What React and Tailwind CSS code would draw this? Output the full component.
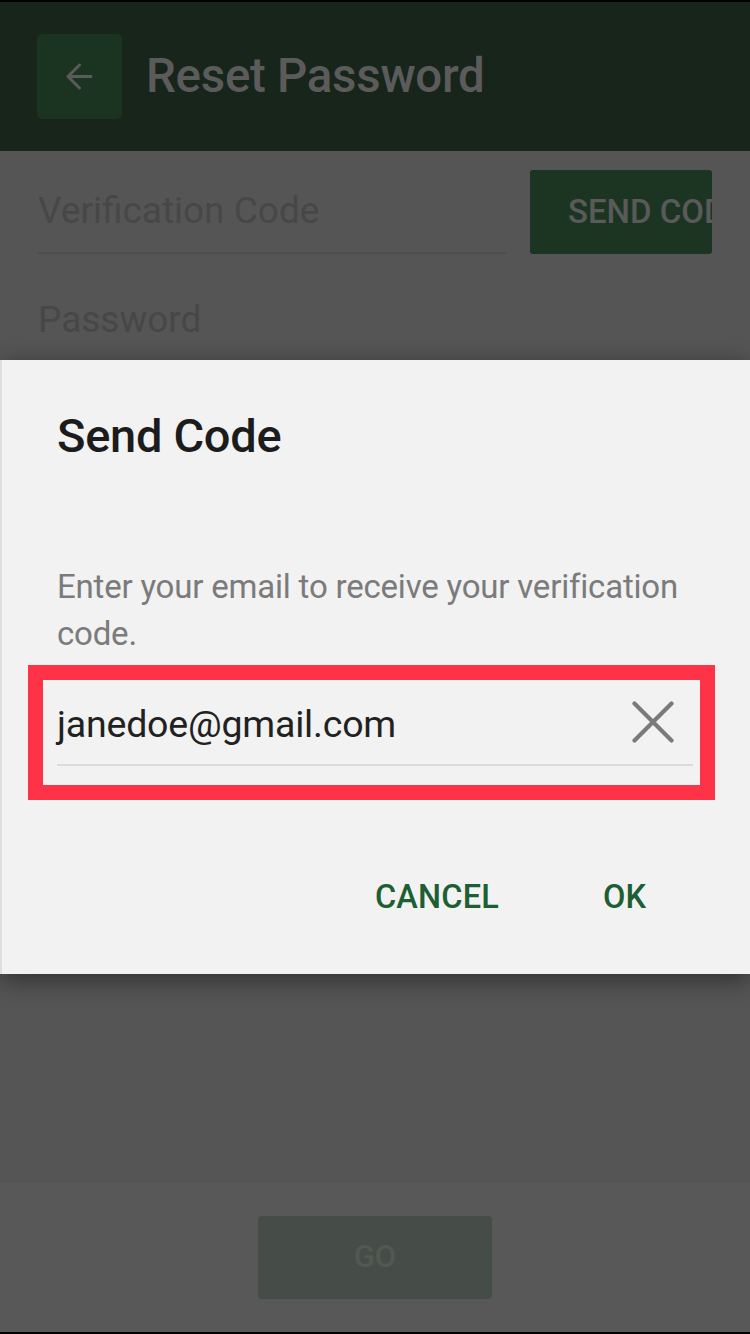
/*
 * Reset Password screen with the "Send Code" dialog open.
 */

function FlechaAtras() {
  return (
    <svg width="27" height="27" viewBox="0 0 27 27" fill="none" stroke="#5b5b5b" strokeWidth="3" strokeLinecap="round" strokeLinejoin="round">
      <path d="M25 13.5H2.5M13.5 2L2 13.5L13.5 25" />
    </svg>
  )
}

function IconoCerrar() {
  return (
    <svg width="42" height="42" viewBox="0 0 42 42" fill="none" stroke="#7a7a7a" strokeWidth="4.2" strokeLinecap="round">
      <path d="M2.5 2.5L39.5 39.5M39.5 2.5L2.5 39.5" />
    </svg>
  )
}

function DialogoEnviarCodigo() {
  return (
    <div className="absolute inset-0 flex items-center">
      <div className="w-full h-[614px] bg-[#f2f2f2] border-l-2 border-[#dedede] shadow-[0_6px_24px_rgba(0,0,0,0.45)] flex flex-col">
        <h2 className="pl-[55px] pt-[49px] text-[47px] leading-[54px] font-medium text-[#1c1c1c] tracking-[-0.3px]">
          Send Code
        </h2>
        <p className="pl-[55px] pr-[30px] mt-[100px] text-[33px] leading-[47px] text-[#7b7b7b] tracking-[-0.2px]">
          Enter your email to receive your verification code.
        </p>

        {/* Campo de correo resaltado */}
        <div className="ml-[26px] mr-[35px] mt-[8px] h-[135px] border-[15px] border-[#ff3347] flex flex-col">
          <div className="ml-[14px] mr-[7px] flex-1 flex flex-col">
            <div className="flex items-center justify-between h-[84px] pr-[19px]">
              <span className="text-[37.5px] text-[#212121] tracking-[-0.2px] pt-[4px]">janedoe@gmail.com</span>
              <IconoCerrar />
            </div>
            <div className="h-[2px] bg-[#dcdcdc]" />
          </div>
        </div>

        <div className="flex justify-end items-center gap-[104px] pr-[104px] mt-[73px]">
          <button className="text-[32.5px] font-medium text-[#1e5e33] tracking-[0.2px]">CANCEL</button>
          <button className="text-[32.5px] font-medium text-[#1e5e33]">OK</button>
        </div>
      </div>
    </div>
  )
}

export default function App() {
  return (
    <div className="relative w-[750px] h-[1334px] overflow-hidden bg-[#555555] border-t-2 border-b-2 border-black font-['Roboto',sans-serif]">
      <div className="flex flex-col h-full">
        {/* Cabecera */}
        <div className="h-[149px] bg-[#17251a] flex items-center pl-[37px] gap-[24px] shrink-0">
          <div className="w-[85px] h-[85px] rounded-[5px] bg-[#1b3422] flex items-center justify-center">
            <FlechaAtras />
          </div>
          <h1 className="text-[47.5px] font-medium text-[#5b5b5b] tracking-[-0.3px]">Reset Password</h1>
        </div>

        {/* Formulario */}
        <div className="flex-1 px-[38px] pt-[19px]">
          <div className="flex items-start gap-[24px]">
            <div className="flex-1 h-[84px] border-b-2 border-[#4d4d4d] flex items-center">
              <span className="text-[37px] text-[#474747]">Verification Code</span>
            </div>
            <div className="w-[182px] h-[84px] rounded-[3px] bg-[#1c3522] overflow-hidden flex items-center">
              <span className="pl-[38px] text-[33px] font-medium text-[#5a5a5a] whitespace-nowrap">SEND CODE</span>
            </div>
          </div>
          <div className="mt-[38px] text-[37px] text-[#474747]">Password</div>
        </div>

        {/* Barra inferior */}
        <div className="h-[149px] bg-[#585858] flex items-center justify-center shrink-0">
          <div className="w-[234px] h-[83px] rounded-[4px] bg-[#464d48] flex items-center justify-center">
            <span className="text-[31px] font-medium text-[#525852]">GO</span>
          </div>
        </div>
      </div>

      <DialogoEnviarCodigo />
    </div>
  )
}
